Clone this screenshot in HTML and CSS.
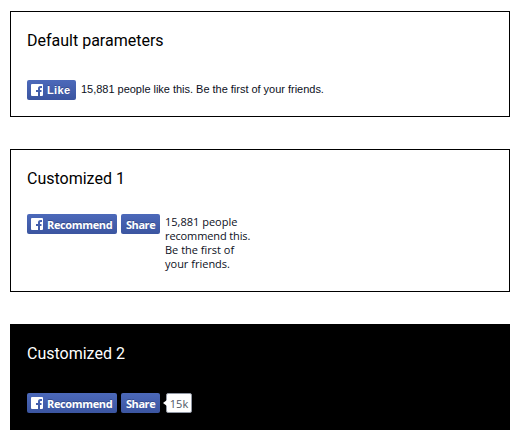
FILE: index.html
```html
<!DOCTYPE html>
<html lang="en">
<head>
<meta charset="utf-8">
<title>Like button parameters</title>
<link rel="stylesheet" href="styles.css">
</head>
<body>
<svg class="symbols" aria-hidden="true">
  <symbol id="fb" viewBox="0 0 12 12">
    <path fill="#fff" d="M1 0h10a1 1 0 0 1 1 1v10a1 1 0 0 1-1 1H9V8H10.500V6H9V5c0-.7.3-1 1-1H11V2H9.500C7.700 2 7 3 7 4.600V6H5v2h2v4H1a1 1 0 0 1-1-1V1a1 1 0 0 1 1-1z"/>
  </symbol>
</svg>
<section class="card">
  <h2 class="title">Default parameters</h2>
  <div class="row">
    <button class="button like"><svg class="icon"><use href="#fb"/></svg><span>Like</span></button>
    <p class="caption">15,881 people like this. Be the first of your friends.</p>
  </div>
</section>
<section class="card tall">
  <h2 class="title">Customized 1</h2>
  <div class="row">
    <button class="button recommend"><svg class="icon"><use href="#fb"/></svg><span>Recommend</span></button>
    <button class="button share"><span>Share</span></button>
    <p class="caption stacked">15,881 people<br><span class="tight">recommend this.</span><br>Be the first of<br>your friends.</p>
  </div>
</section>
<section class="card dark">
  <h2 class="title">Customized 2</h2>
  <div class="row">
    <button class="button recommend"><svg class="icon"><use href="#fb"/></svg><span>Recommend</span></button>
    <button class="button share"><span>Share</span></button>
    <div class="count">15k</div>
  </div>
</section>
</body>
</html>
```

FILE: styles.css
```css
* {
  box-sizing: border-box;
}

body {
  margin: 0;
  padding: 11px 10px 10px;
  display: flex;
  flex-direction: column;
  gap: 32px;
  background: #fff;
}

.symbols {
  display: none;
}

.card {
  height: 106px;
  padding: 19px 16px 0;
  border: 1px solid #000;
  color: #000;
}

.card.tall {
  height: 143px;
}

.card.dark {
  background: #000;
  color: #fff;
}

.title {
  margin: 0 0 29px;
  font: 400 16px/20px Roboto, sans-serif;
}

.tall .title {
  margin-bottom: 25px;
}

.row {
  display: flex;
  align-items: flex-start;
  gap: 4px;
}

.button {
  display: flex;
  align-items: center;
  gap: 4px;
  height: 20px;
  margin: 0;
  padding: 0 0 0 4px;
  border: 0;
  border-radius: 2px;
  background: linear-gradient(#4c69ba, #3b55a0);
  color: #fff;
  font: 700 11px/20px "Open Sans", sans-serif;
  letter-spacing: -0.36px;
  text-shadow: 0 -1px 0 #354c8c;
  white-space: nowrap;
}

.button span {
  padding-top: 2px;
  line-height: 18px;
}

.button.like {
  width: 49px;
  font-family: "Liberation Sans", sans-serif;
  letter-spacing: 0.4px;
}

.button.like span {
  padding-top: 0;
  line-height: 20px;
}

.recommend {
  width: 90px;
}

.share {
  width: 39px;
  padding-left: 5px;
}

.button.share {
  letter-spacing: -0.45px;
}

.icon {
  flex: none;
  width: 12px;
  height: 12px;
}

.caption {
  margin: 0 0 0 1px;
  color: #0c0f1c;
  font: 11px/19px "Liberation Sans", sans-serif;
  letter-spacing: -0.02px;
  white-space: nowrap;
}

.stacked {
  margin: 1px 0 0;
  padding-left: 1px;
  font: 11px/14px "Open Sans", sans-serif;
  letter-spacing: 0;
}

.tight {
  letter-spacing: -0.12px;
}

.count {
  position: relative;
  width: 26px;
  height: 20px;
  margin-left: 2px;
  border: 1px solid #9197a3;
  border-radius: 2px;
  background: #fff;
  color: #4e5665;
  font: 11px/20px "Open Sans", sans-serif;
  text-align: center;
}

.count::before {
  content: "";
  position: absolute;
  left: -4px;
  top: 6px;
  border: 3px solid transparent;
  border-left: 0;
  border-right: 4px solid #fff;
}
```
